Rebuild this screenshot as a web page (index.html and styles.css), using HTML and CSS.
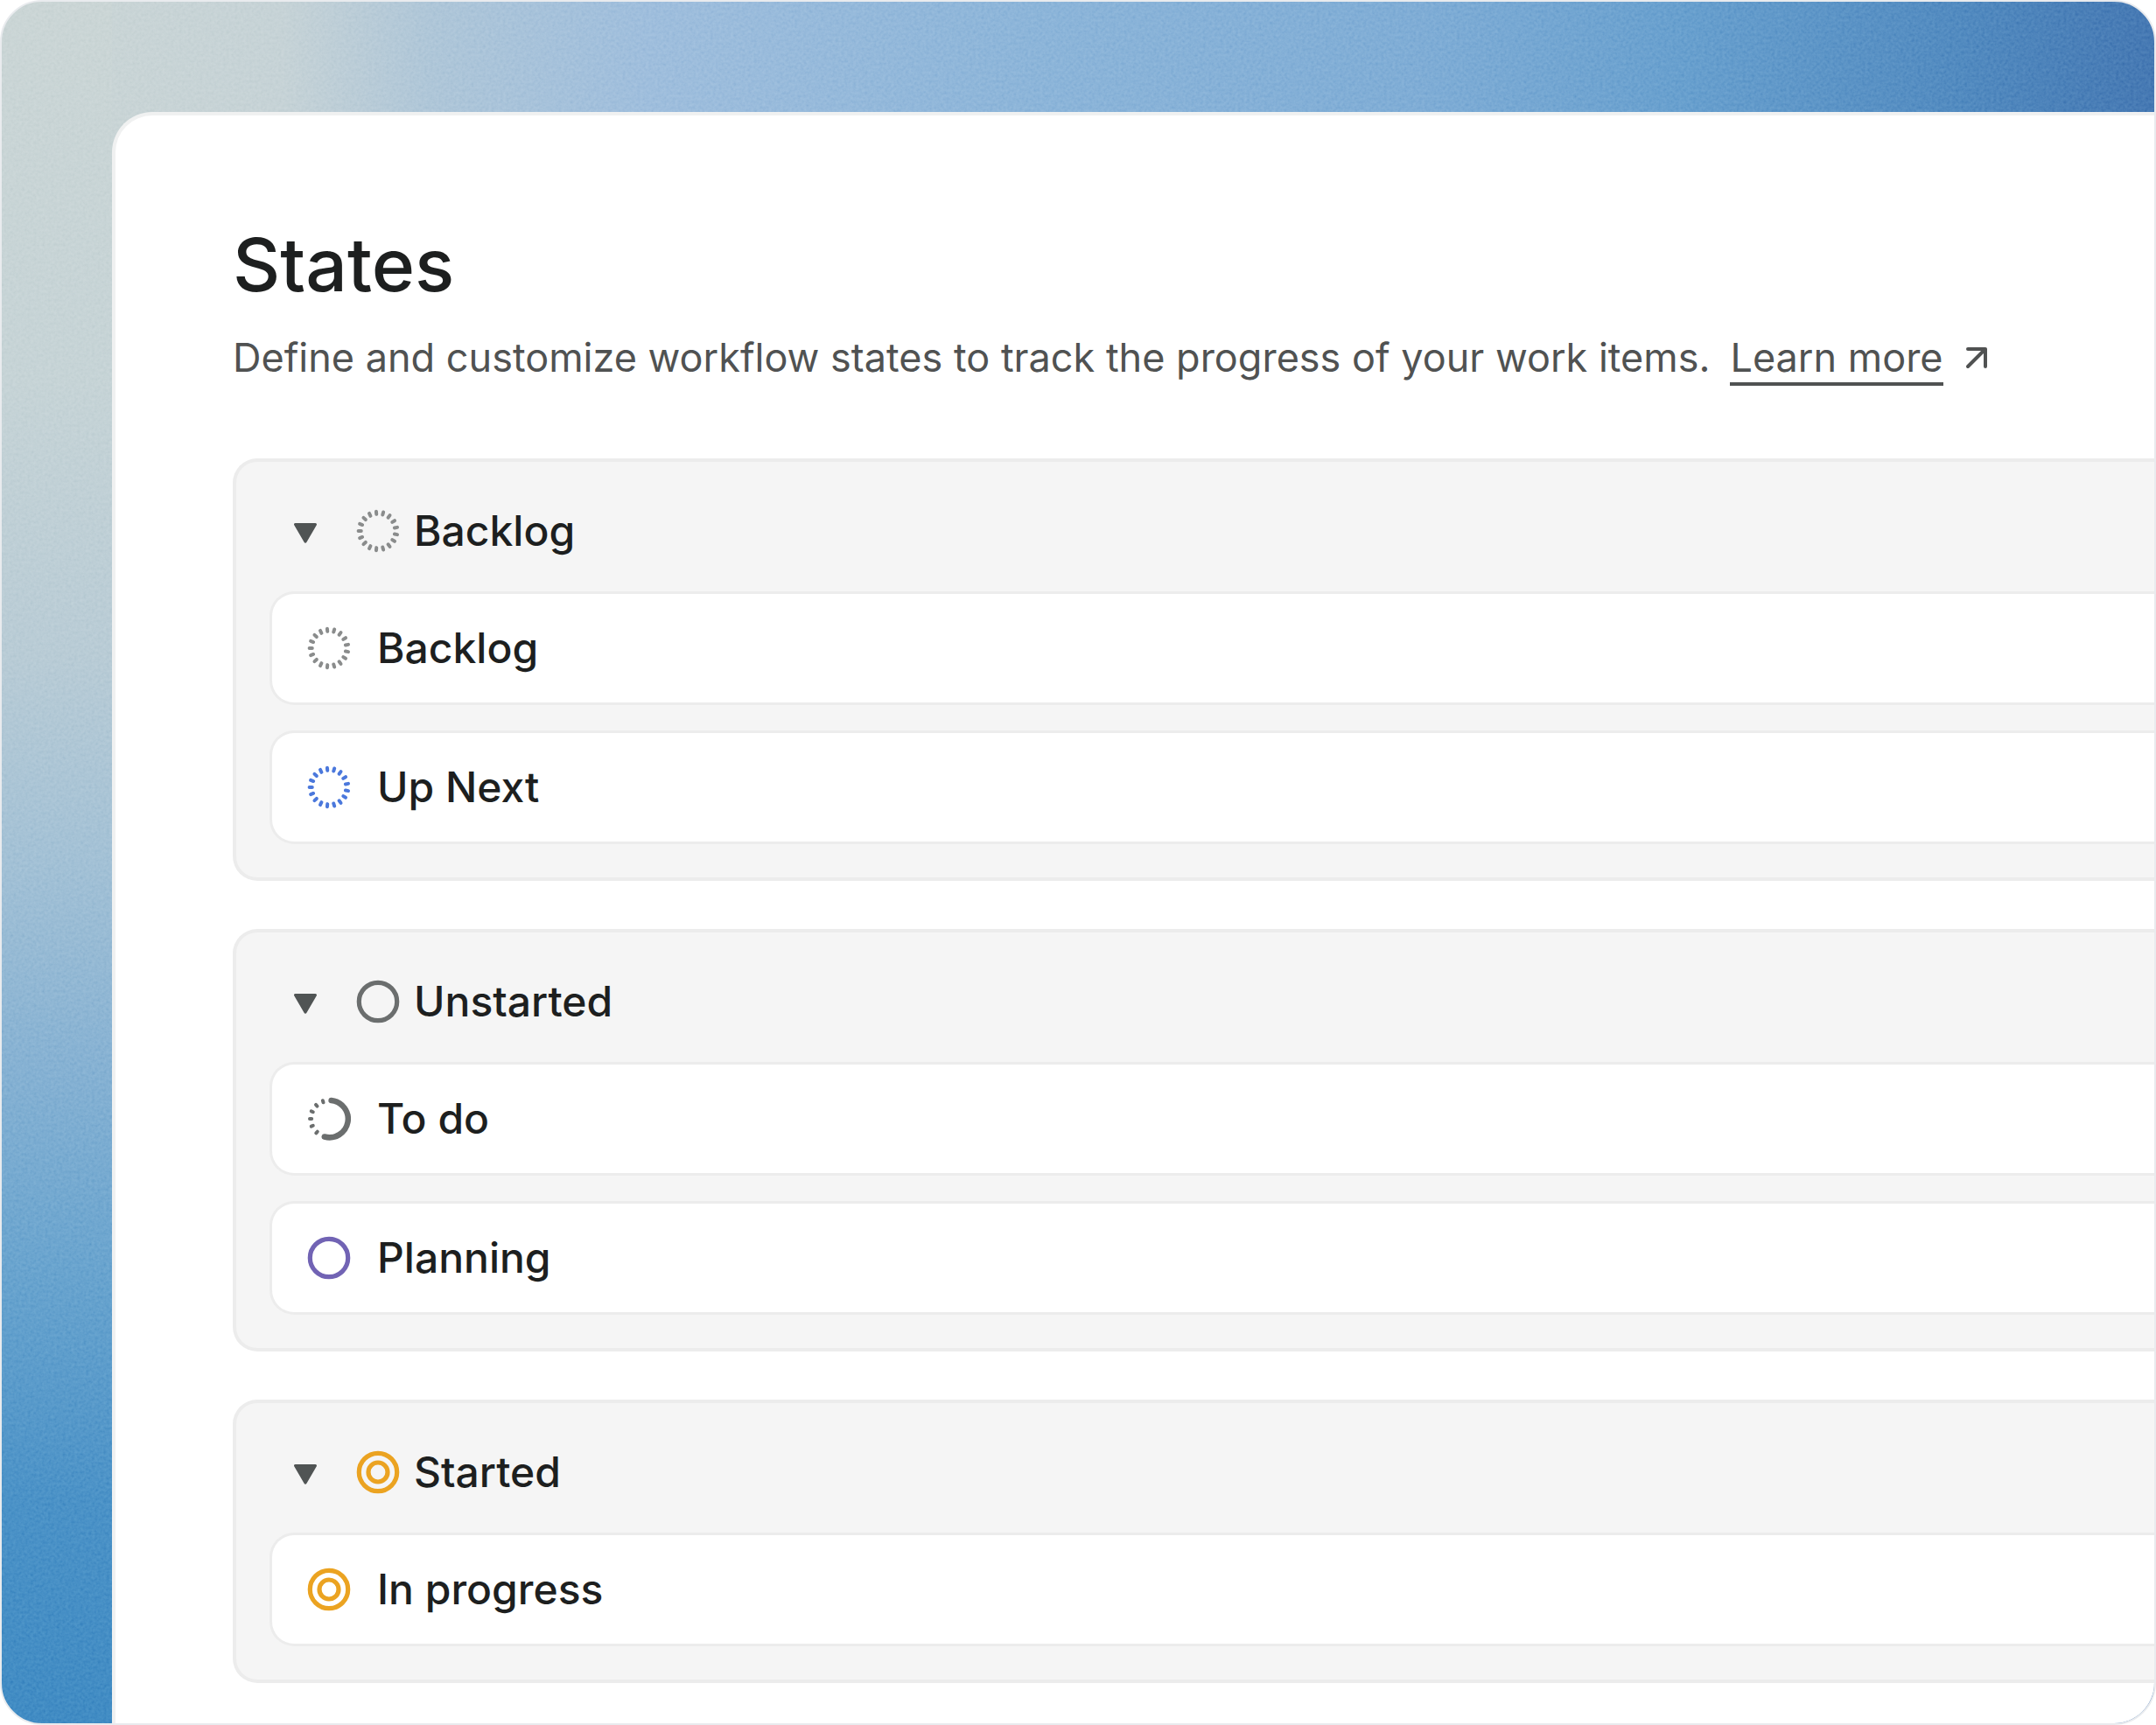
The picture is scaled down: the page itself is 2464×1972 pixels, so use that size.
FILE: index.html
```
<!DOCTYPE html>
<html lang="en">
<head>
    <meta charset="UTF-8">
    <meta name="viewport" content="width=device-width, initial-scale=1.0">
    <title>States</title>
    <link rel="stylesheet" href="styles.css">
</head>
<body>
    <!-- shared icons -->
    <svg class="sprite" aria-hidden="true">
        <symbol id="icon-backlog" viewBox="0 0 50 50">
            <g stroke="currentColor" stroke-width="4" stroke-linecap="round">
                <path id="tick" d="M2.6 25h3.2"/>
                <use href="#tick" transform="rotate(21.2 25 25)"/>
                <use href="#tick" transform="rotate(42.4 25 25)"/>
                <use href="#tick" transform="rotate(63.5 25 25)"/>
                <use href="#tick" transform="rotate(84.7 25 25)"/>
                <use href="#tick" transform="rotate(105.9 25 25)"/>
                <use href="#tick" transform="rotate(127.1 25 25)"/>
                <use href="#tick" transform="rotate(148.2 25 25)"/>
                <use href="#tick" transform="rotate(169.4 25 25)"/>
                <use href="#tick" transform="rotate(190.6 25 25)"/>
                <use href="#tick" transform="rotate(211.8 25 25)"/>
                <use href="#tick" transform="rotate(232.9 25 25)"/>
                <use href="#tick" transform="rotate(254.1 25 25)"/>
                <use href="#tick" transform="rotate(275.3 25 25)"/>
                <use href="#tick" transform="rotate(296.5 25 25)"/>
                <use href="#tick" transform="rotate(317.6 25 25)"/>
                <use href="#tick" transform="rotate(338.8 25 25)"/>
            </g>
        </symbol>
        <symbol id="icon-todo" viewBox="0 0 50 50">
            <g fill="none" stroke="currentColor" stroke-linecap="round">
                <path stroke-width="6.5" d="M27.6 4A21.2 21.2 0 1 1 19.8 45.5"/>
                <g stroke-width="4">
                    <path id="dash" d="M3 25h2.2"/>
                    <use href="#dash" transform="rotate(-23 25 25)"/>
                    <use href="#dash" transform="rotate(-48 25 25)"/>
                    <use href="#dash" transform="rotate(23 25 25)"/>
                    <use href="#dash" transform="rotate(47 25 25)"/>
                    <use href="#dash" transform="rotate(71 25 25)"/>
                </g>
            </g>
        </symbol>
        <symbol id="icon-circle" viewBox="0 0 50 50">
            <circle cx="25" cy="25" r="21.7" fill="none" stroke="currentColor" stroke-width="5.2"/>
        </symbol>
        <symbol id="icon-started" viewBox="0 0 50 50">
            <g fill="none" stroke="currentColor" stroke-width="5.2">
                <circle cx="25" cy="25" r="21.7"/>
                <circle cx="25" cy="25" r="11"/>
            </g>
        </symbol>
        <symbol id="icon-chevron" viewBox="0 0 26 30">
            <path d="M1.5 7.5h23L13 27.3z" fill="currentColor" stroke="currentColor" stroke-width="3" stroke-linejoin="round"/>
        </symbol>
    </svg>

    <div class="frame">
        <svg class="grain" aria-hidden="true">
            <filter id="noise" x="0" y="0" width="100%" height="100%">
                <feTurbulence type="fractalNoise" baseFrequency="0.3" numOctaves="2"/>
                <feColorMatrix type="saturate" values="0"/>
                <feComponentTransfer>
                    <feFuncA type="linear" slope="0" intercept="1"/>
                </feComponentTransfer>
            </filter>
            <rect width="100%" height="100%" filter="url(#noise)"/>
        </svg>

        <main class="panel">
            <header class="page-header">
                <h1 class="title">States</h1>
                <p class="description">
                    <span>Define and customize workflow states to track the progress of your work items.</span>
                    <a href="#" class="learn-more"><span class="learn-more-text">Learn more</span><svg class="arrow" viewBox="0 0 28 32" aria-hidden="true"><path d="M4 4h20v20M24 4L4 24" fill="none" stroke="currentColor" stroke-width="4" stroke-linecap="round" stroke-linejoin="round"/></svg></a>
                </p>
            </header>

            <div class="groups">
                <section class="group">
                    <button class="group-header" type="button" aria-expanded="true">
                        <svg class="chevron"><use href="#icon-chevron"/></svg>
                        <svg class="icon gray-light"><use href="#icon-backlog"/></svg>
                        <span>Backlog</span>
                    </button>
                    <ul class="states">
                        <li class="state"><svg class="icon gray-light"><use href="#icon-backlog"/></svg>Backlog</li>
                        <li class="state"><svg class="icon blue"><use href="#icon-backlog"/></svg>Up Next</li>
                    </ul>
                </section>

                <section class="group">
                    <button class="group-header" type="button" aria-expanded="true">
                        <svg class="chevron"><use href="#icon-chevron"/></svg>
                        <svg class="icon gray"><use href="#icon-circle"/></svg>
                        <span>Unstarted</span>
                    </button>
                    <ul class="states">
                        <li class="state"><svg class="icon gray"><use href="#icon-todo"/></svg>To do</li>
                        <li class="state"><svg class="icon purple"><use href="#icon-circle"/></svg>Planning</li>
                    </ul>
                </section>

                <section class="group">
                    <button class="group-header" type="button" aria-expanded="true">
                        <svg class="chevron"><use href="#icon-chevron"/></svg>
                        <svg class="icon orange"><use href="#icon-started"/></svg>
                        <span>Started</span>
                    </button>
                    <ul class="states">
                        <li class="state"><svg class="icon orange"><use href="#icon-started"/></svg>In progress</li>
                    </ul>
                </section>
            </div>
        </main>
    </div>
</body>
</html>
```
FILE: styles.css
```
* {
    box-sizing: border-box;
}

body {
    margin: 0;
    background: #fff;
    color: #1d1f1f;
    font-family: Inter, "Liberation Sans", sans-serif;
}

.sprite {
    position: absolute;
    width: 0;
    height: 0;
}

.frame {
    position: relative;
    display: flex;
    min-height: 100vh;
    padding: 126px 0 0 126px;
    border: 2px solid #e9ebee;
    border-radius: 48px;
    overflow: hidden;
    background:
        linear-gradient(to bottom, #c4d0d0 0, #bfced1 22%, #b0c5d0 38%, #98b9d0 50%, #79a8cd 62%, #5a99c8 74%, #3c86c0 87%, #327fbc 100%) left / 126px 100% no-repeat,
        linear-gradient(to right, #c4d0d0 0, #bfcdd1 13%, #a5bfd3 20%, #94b6d8 30%, #80acd4 48%, #72a3d0 66%, #5a95c8 78%, #437eb8 91%, #376baa 100%);
}

.grain {
    position: absolute;
    inset: 0;
    width: 100%;
    height: 100%;
    opacity: 0.5;
    mix-blend-mode: soft-light;
}

.panel {
    position: relative;
    flex: 1;
    min-width: 0;
    padding: 123px 0 46px 134px;
    border: 4px solid #f0f1f1;
    border-right: none;
    border-bottom: none;
    border-top-left-radius: 46px;
    background: #fff;
}

.page-header {
    margin-bottom: 83px;
}

.title {
    margin: 0 0 30px;
    font-size: 84px;
    font-weight: 500;
    line-height: 96px;
}

.description {
    display: flex;
    align-items: baseline;
    gap: 23px;
    margin: 0;
    color: #505252;
    font-size: 45px;
    line-height: 56px;
    white-space: nowrap;
}

.learn-more {
    display: flex;
    align-items: center;
    gap: 24px;
    color: inherit;
    text-decoration: none;
}

.learn-more-text {
    border-bottom: 4px solid #505252;
}

.arrow {
    width: 28px;
    height: 32px;
}

.groups {
    display: flex;
    flex-direction: column;
    gap: 55px;
}

.group {
    padding: 38px 0 38px 38px;
    border: 4px solid #ececec;
    border-right: none;
    border-radius: 28px 0 0 28px;
    background: #f5f5f5;
}

.group-header {
    display: flex;
    align-items: center;
    gap: 16px;
    width: 100%;
    height: 82px;
    margin-bottom: 28px;
    padding: 0 0 0 28px;
    border: none;
    background: none;
    color: inherit;
    font: 500 48px/60px Inter, "Liberation Sans", sans-serif;
    text-align: left;
    cursor: pointer;
}

.chevron {
    width: 26px;
    height: 30px;
    margin-right: 29px;
    color: #505454;
}

.states {
    display: flex;
    flex-direction: column;
    gap: 29px;
    margin: 0;
    padding: 0;
    list-style: none;
}

.state {
    display: flex;
    align-items: center;
    gap: 30px;
    height: 130px;
    padding-left: 40px;
    border: 3px solid #ececec;
    border-right: none;
    border-radius: 28px 0 0 28px;
    background: #fff;
    font-size: 48px;
    font-weight: 500;
    line-height: 60px;
}

.icon {
    flex: none;
    width: 50px;
    height: 50px;
}

.gray-light {
    color: #8a8c8c;
}

.gray {
    color: #6b6e6e;
}

.blue {
    color: #4b78dc;
}

.purple {
    color: #7163b4;
}

.orange {
    color: #eba321;
}
```
